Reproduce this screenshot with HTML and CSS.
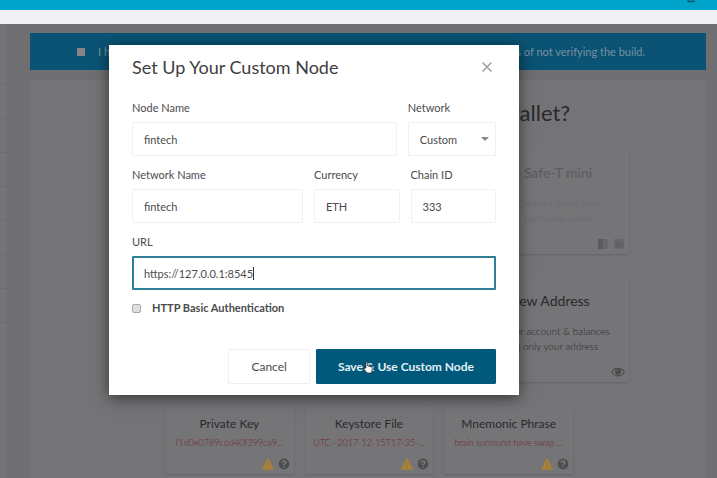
FILE: index.html
```html
<!DOCTYPE html>
<html lang="en">
<head>
<meta charset="utf-8">
<title>Set Up Your Custom Node</title>
<link rel="stylesheet" href="styles.css">
</head>
<body>
<svg class="defs" aria-hidden="true">
  <symbol id="warn" viewBox="0 0 12 12"><path d="M6 .7 11.5 11.2H.5z" fill="#a98138" stroke="#a98138" stroke-width="1" stroke-linejoin="round"/><path d="M6 4.2v3.2M6 8.7v1.1" stroke="#857550" stroke-width="1"/></symbol>
  <symbol id="help" viewBox="0 0 12 12"><circle cx="6" cy="6" r="5.4" fill="#4e4e50"/><path d="M4.2 4.7C4.3 2.4 7.9 2.5 7.8 4.6 7.8 5.8 6 5.8 6 7.1M6 8.2v1.3" fill="none" stroke="#7a7a7c" stroke-width="1.5"/></symbol>
</svg>
<header class="topbar"><svg class="topbar-icon" viewBox="0 0 8 3" aria-hidden="true"><path d="M1 0v1.5h6V0" fill="none" stroke="#12566a" stroke-width="1.3"/></svg></header>
<div class="strip"></div>
<div class="page">
  <aside class="rail"><i></i><i></i><i></i><i></i><i></i><i></i><i></i><i></i></aside>
  <main class="content">
    <div class="banner"><label class="ack"><input type="checkbox" class="ack-box"> I have</label><span>risks of not verifying the build.</span></div>
    <section class="panel">
      <h1 class="heading">How would you like to access your wallet?</h1>
      <div class="row row-wide">
        <article class="card card-big card-off">
          <h2>Safe-T mini</h2>
          <p>Connect using your<br>hardware wallet</p>
          <div class="icons">
            <svg viewBox="0 0 12 12" aria-hidden="true"><path d="M1 1h10v10H1z" fill="#68686a"/><path d="M1 1h5v10H1z" fill="#565c60"/></svg>
            <svg viewBox="0 0 12 12" aria-hidden="true"><path d="M1 1h10v10H1z" fill="#68686a"/><path d="M3 3h3v6H3zM7 5h3v4H7z" fill="#606062"/></svg>
          </div>
        </article>
      </div>
      <div class="row row-wide">
        <article class="card card-big card-view">
          <h2>View Address</h2>
          <p>See your account &amp; balances<br>using only your address</p>
          <div class="icons"><svg class="eye" viewBox="0 0 14 12" aria-hidden="true"><path d="M.6 6C3.4.9 10.6.9 13.4 6 10.6 11.1 3.4 11.1.6 6z" fill="none" stroke="#4c4c4e" stroke-width="1.1"/><circle cx="7" cy="5.6" r="3.1" fill="#4c4c4e"/><path d="M5.6 5.3Q5.7 4 7 3.9" fill="none" stroke="#747376" stroke-width=".7"/></svg></div>
        </article>
      </div>
      <div class="row row-small">
        <article class="card"><h2>Private Key</h2><p class="sample">f1d0e0789c6d40f399ca9...</p><div class="icons"><svg><use href="#warn"/></svg><svg><use href="#help"/></svg></div></article>
        <article class="card"><h2>Keystore File</h2><p class="sample">UTC--2017-12-15T17-35-...</p><div class="icons"><svg><use href="#warn"/></svg><svg><use href="#help"/></svg></div></article>
        <article class="card"><h2>Mnemonic Phrase</h2><p class="sample">brain surround have swap ...</p><div class="icons"><svg><use href="#warn"/></svg><svg><use href="#help"/></svg></div></article>
      </div>
    </section>
  </main>
</div>
<form class="modal" role="dialog" aria-labelledby="title">
  <div class="modal-head">
    <h2 id="title">Set Up Your Custom Node</h2>
    <button type="button" class="close" aria-label="Close"><svg viewBox="0 0 10 10"><path d="M.5.5l9 9M9.5.5l-9 9" stroke="#a0a0a0" stroke-width="1.5"/></svg></button>
  </div>
  <div class="fields fields-two">
    <div class="field"><label for="node">Node Name</label><input id="node" class="box" value="fintech"></div>
    <div class="field"><label for="net">Network</label><div class="pick"><select id="net" class="box"><option>Custom</option></select><svg class="arrow" viewBox="0 0 8 4" aria-hidden="true"><path d="M0 0h8L4 4z" fill="#888"/></svg></div></div>
  </div>
  <div class="fields fields-three">
    <div class="field"><label for="netname">Network Name</label><input id="netname" class="box" value="fintech"></div>
    <div class="field"><label for="cur">Currency</label><input id="cur" class="box" value="ETH"></div>
    <div class="field"><label for="chain">Chain ID</label><input id="chain" class="box" value="333"></div>
  </div>
  <div class="field"><label for="url">URL</label><div class="box box-active"><input id="url" value="https://127.0.0.1:8545"><span class="caret"></span></div></div>
  <label class="auth"><input type="checkbox"> HTTP Basic Authentication</label>
  <div class="actions">
    <button type="button" class="btn">Cancel</button>
    <button type="button" class="btn btn-main">Save &amp; Use Custom Node
      <svg class="pointer" viewBox="0 0 10 13" aria-hidden="true"><path d="M3 7V1.5q.9-1 1.7 0V5l3.8.9q1 .4.8 1.5L8.6 12H4L1 8.2q0-1.3 1-1z" fill="#fff" stroke="#333" stroke-width=".8"/></svg>
    </button>
  </div>
</form>
</body>
</html>
```

FILE: styles.css
```css
* { box-sizing: border-box; }
html, body { height: 100%; }
body { margin: 0; display: flex; flex-direction: column; overflow: hidden; font-family: Lato, "Liberation Sans", sans-serif; font-size: 11px; color: #2a2a2c; background: #6f6e71; }
h1, h2, p { margin: 0; font-weight: 400; }
input, select, button { font: inherit; color: inherit; margin: 0; }
.defs { position: absolute; width: 0; height: 0; }

.topbar { flex: none; height: 10px; background: #00a4ca; display: flex; justify-content: flex-end; padding-right: 22px; }
.topbar-icon { width: 8px; height: 3px; }
.strip { flex: none; height: 14px; background: #f0eff3; }
.page { flex: 1; min-height: 0; display: flex; gap: 23px; padding-right: 11px; }
.rail { width: 7px; background: #747376; padding-top: 27px; }
.rail i { display: block; height: 34px; border-bottom: 1px solid #6c6b6e; }
.content { flex: 1; min-width: 0; padding-top: 9px; display: flex; flex-direction: column; gap: 10px; }
.banner { height: 37px; flex: none; background: #0a5374; color: #78919e; display: flex; align-items: center; justify-content: space-between; padding: 0 61px 0 47px; }
.ack { display: flex; align-items: center; gap: 13px; }
.ack-box { appearance: none; width: 8px; height: 8px; background: #858487; }
.panel { flex: 1; background: #747376; padding: 17px 77px 0; }
.heading { font-size: 22px; line-height: 32px; text-align: center; margin-bottom: 18px; }
.row { display: flex; }
.row-wide { justify-content: flex-end; margin-bottom: 21px; }
.row-small { gap: 11px; padding: 0 56px 0 58px; margin-top: 24px; }
.card { flex: 1; min-width: 0; height: 68px; padding: 7px 4px 0; border-radius: 2px; background: #757477; box-shadow: 0 1px 2px #656467; text-align: center; white-space: nowrap; display: flex; flex-direction: column; }
.card h2 { font-size: 12px; line-height: 22px; }
.card p { font-size: 9px; line-height: 15px; font-weight: 300; }
.card .sample { color: #74262b; }
.icons { display: flex; justify-content: flex-end; gap: 4px; margin-top: auto; padding-bottom: 4px; }
.icons svg { width: 12px; height: 12px; }
.icons .eye { width: 14px; }
.card-big { flex: 0 0 142px; height: 107px; padding-top: 14px; }
.card-view { flex-basis: 162px; }
.card-big h2 { font-size: 14px; line-height: 24px; margin-bottom: 11px; }
.card-big p { font-size: 10px; }
.card-off { color: #5b5a5d; }
.card-off p { color: #69686b; }

.modal { position: absolute; left: 109px; top: 45px; width: 410px; max-width: 100%; padding: 10px 23px 11px; background: #fff; color: #4b4b4d; box-shadow: 0 3px 14px rgba(0, 0, 0, .55); }
.modal-head { display: flex; align-items: center; justify-content: space-between; margin-bottom: 20px; padding-right: 4px; }
.modal-head h2 { font-size: 18px; line-height: 24px; color: #404042; }
.close { padding: 0; border: 0; background: none; width: 10px; height: 10px; display: flex; }
.fields { display: grid; gap: 11px; }
.fields-two { grid-template-columns: 3fr 1fr; }
.fields-three { grid-template-columns: 2fr 1fr 1fr; }
.field { min-width: 0; margin-bottom: 10px; }
.field label { display: block; line-height: 18px; margin-bottom: 5px; }
.box { display: block; width: 100%; height: 34px; padding: 0 11px; border: 1px solid #f0f0f4; border-radius: 1px; background: #fff; outline: 0; }
.pick { position: relative; }
select.box { appearance: none; }
.arrow { position: absolute; right: 7px; top: 15px; width: 8px; height: 4px; }
.box-active { display: flex; align-items: center; padding: 0 10px; border: 2px solid #2d7e96; }
.box-active input { field-sizing: content; border: 0; padding: 0; outline: 0; background: none; }
.caret { width: 1px; height: 13px; background: #333; }
.auth { display: flex; align-items: center; gap: 11px; line-height: 16px; font-weight: 700; }
.auth input { appearance: none; width: 9px; height: 9px; border: 1px solid #a8a8a8; border-radius: 2px; background: #e0e0e0; }
.actions { display: flex; justify-content: flex-end; gap: 6px; margin-top: 33px; }
.btn { height: 35px; padding: 0 22px; border: 1px solid #f0f0f4; border-radius: 1px; background: #fff; font-size: 12px; }
.btn-main { position: relative; padding: 0 21px; border-color: #00587b; background: #00587b; color: #e4f0f5; font-weight: 700; }
.pointer { position: absolute; left: 46px; top: 11px; width: 10px; height: 13px; }
```
